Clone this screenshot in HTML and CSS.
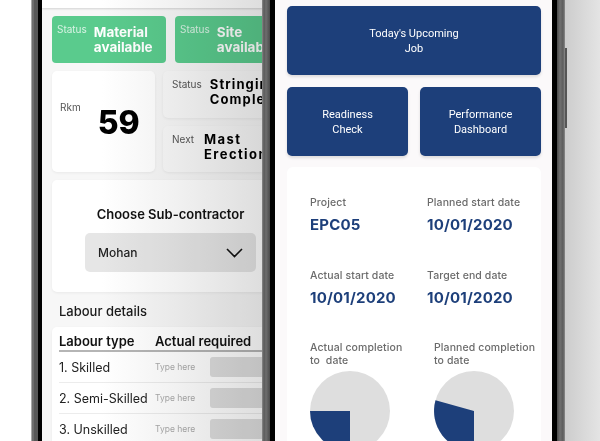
FILE: index.html
```html
<!DOCTYPE html>
<html>
<head>
<meta charset="utf-8">
<link rel="stylesheet" href="styles.css">
</head>
<body>
<div class="scene">
  <div class="phone phone-left">
    <div class="bezel bezel-left">
      <div class="screen screen-left">
        <div class="topbar"></div>
        <div class="green-row">
          <div class="green-card"><span class="g-label">Status</span><span class="g-value">Material<br>available</span></div>
          <div class="green-card"><span class="g-label">Status</span><span class="g-value">Site<br>available</span></div>
        </div>
        <div class="info-row">
          <div class="card rkm-card"><span class="small-label rkm-label">Rkm</span><span class="big-num">59</span></div>
          <div class="info-col">
            <div class="card stat-card"><span class="small-label">Status</span><span class="stat-value">Stringing<br>Completed</span></div>
            <div class="card stat-card next-card"><span class="small-label">Next</span><span class="stat-value">Mast<br>Erection</span></div>
          </div>
        </div>
        <div class="card choose-card">
          <div class="choose-title">Choose Sub-contractor</div>
          <div class="dropdown">
            <span>Mohan</span>
            <svg class="chev" width="17" height="10" viewBox="0 0 17 10"><path d="M1 1 L8.5 8.5 L16 1" fill="none" stroke="#111" stroke-width="1.6"/></svg>
          </div>
        </div>
        <div class="section-title">Labour details</div>
        <div class="card table-card">
          <div class="t-head"><span>Labour type</span><span>Actual required</span></div>
          <div class="t-row"><span class="t-name">1. Skilled</span><span class="t-hint">Type here</span><span class="t-input"></span></div>
          <div class="t-row"><span class="t-name">2. Semi-Skilled</span><span class="t-hint">Type here</span><span class="t-input"></span></div>
          <div class="t-row"><span class="t-name">3. Unskilled</span><span class="t-hint">Type here</span><span class="t-input"></span></div>
        </div>
        <div class="glare"></div>
      </div>
    </div>
  </div>

  <div class="phone phone-right">
    <div class="side-btn"></div>
    <div class="bezel bezel-right">
      <div class="screen screen-right">
        <div class="btn btn-wide">Today's Upcoming<br>Job</div>
        <div class="btn-row">
          <div class="btn">Readiness<br>Check</div>
          <div class="btn">Performance<br>Dashboard</div>
        </div>
        <div class="proj-card">
          <div class="kv-grid">
            <div class="kv"><div class="k">Project</div><div class="v">EPC05</div></div>
            <div class="kv"><div class="k">Planned start date</div><div class="v">10/01/2020</div></div>
            <div class="kv"><div class="k">Actual start date</div><div class="v">10/01/2020</div></div>
            <div class="kv"><div class="k">Target end date</div><div class="v">10/01/2020</div></div>
          </div>
          <div class="pie-grid">
            <div class="pie-item">
              <div class="k">Actual completion<br>to&nbsp; date</div>
              <svg class="pie" width="80" height="80" viewBox="0 0 80 80"><circle cx="40" cy="40" r="40" fill="#dedede"/><path d="M40 40 L0 40 A40 40 0 0 0 40 80 Z" fill="#1d3f7a"/></svg>
            </div>
            <div class="pie-item">
              <div class="k">Planned completion<br>to date</div>
              <svg class="pie" width="80" height="80" viewBox="0 0 80 80"><circle cx="40" cy="40" r="40" fill="#dedede"/><path d="M40 40 L40 80 A40 40 0 0 1 1.5 29.3 Z" fill="#1d3f7a"/></svg>
            </div>
          </div>
        </div>
      </div>
    </div>
  </div>
</div>
</body>
</html>
```

FILE: styles.css
```css
* { box-sizing: border-box; }
html, body { margin: 0; padding: 0; }
body {
  width: 600px;
  height: 441px;
  overflow: hidden;
  background: linear-gradient(90deg, #fff 0, #fff 300px, #cdcdcd 566px, #e4e4e4 600px);
  font-family: "Inter", "Roboto", sans-serif;
}
.scene { position: relative; width: 600px; height: 441px; overflow: hidden; }

/* phones */
.phone {
  position: absolute;
  top: -40px;
  height: 520px;
  background: #585858;
}
.phone-left {
  left: 31px;
  width: 290px;
  padding-left: 7px;
  box-shadow: inset 1px 0 0 #a8a8a8, inset 3px 0 0 #6d6d6d;
}
.phone-right {
  left: 262px;
  width: 303px;
  padding: 0 8px;
  background: linear-gradient(90deg, #8a8a8a 0, #5a5a5a 2px, #6e6e6e 4px, #4a4a4a 8px, #4a4a4a 295px, #707070 298px, #5c5c5c 301px, #8c8c8c 303px);
}
.side-btn {
  position: absolute;
  right: -2px;
  top: 88px;
  width: 2px;
  height: 80px;
  background: #555;
}
.bezel { height: 100%; background: #000; }
.bezel-left { padding-left: 4px; }
.bezel-right { padding: 0 5px; }
.screen { height: 100%; position: relative; overflow: hidden; }

/* left screen */
.screen-left {
  width: 257px;
  background: #f7f7f7;
  padding: 0 10px;
  display: flex;
  flex-direction: column;
}
.topbar {
  height: 48px;
  margin: 0 -10px;
  background: #fff;
  box-shadow: 0 1px 2px rgba(0,0,0,.15);
  flex: none;
}
.green-row {
  margin-top: 8px;
  display: grid;
  grid-template-columns: 114px 114px;
  gap: 9px;
}
.green-card {
  height: 47px;
  background: #5acb8d;
  border-radius: 4px;
  display: flex;
  padding: 7px 5px 0;
  gap: 7px;
}
.g-label { font-size: 10px; color: #d8f3e4; line-height: 12px; }
.g-value { font-size: 13.5px; font-weight: 700; color: #fff; line-height: 15px; margin-top: 2px; }

.card { background: #fff; border-radius: 5px; box-shadow: 0 1px 3px rgba(0,0,0,.06); }
.info-row {
  margin-top: 8px;
  display: grid;
  grid-template-columns: 103px 1fr;
  gap: 8px;
  height: 101px;
}
.rkm-card { display: flex; align-items: center; padding-left: 8px; }
.small-label { font-size: 10px; color: #555; line-height: 12px; }
.rkm-label { margin-bottom: 30px; }
.big-num { font-size: 32px; font-weight: 800; color: #000; margin-left: 17px; line-height: 32px; margin-top: 2px; }
.info-col { display: flex; flex-direction: column; gap: 8px; }
.stat-card { flex: 1; display: flex; padding: 6px 9px 0; gap: 8px; background: #f9f9f9; }
.stat-card .small-label { margin-top: 1px; }
.stat-value { font-size: 13px; font-weight: 700; letter-spacing: 1.1px; line-height: 15px; color: #000; }
.next-card { gap: 10px; }
.next-card .stat-value { letter-spacing: 1.4px; }

.choose-card {
  margin-top: 8px;
  height: 112px;
  display: flex;
  flex-direction: column;
  align-items: center;
  padding-top: 26px;
}
.choose-title { font-size: 13px; font-weight: 600; color: #111; line-height: 16px; }
.dropdown {
  margin-top: 11px;
  width: 171px;
  height: 39px;
  background: #e6e6e6;
  border-radius: 5px;
  display: flex;
  align-items: center;
  justify-content: space-between;
  padding: 0 13px 0 13px;
  font-size: 12px;
  font-weight: 500;
  color: #222;
}
.chev { margin-top: 1px; }

.section-title { margin-top: 11px; padding-left: 7px; font-size: 13px; font-weight: 500; color: #1a1a1a; line-height: 16px; }
.table-card { margin-top: 8px; padding: 6px 0 0 7px; flex: 1; }
.t-head {
  display: grid;
  grid-template-columns: 96px 1fr;
  font-size: 13px;
  font-weight: 600;
  color: #111;
  line-height: 16px;
  height: 19px;
  border-bottom: 2px solid #b5b5b5;
}
.t-row {
  display: grid;
  grid-template-columns: 96px 55px 1fr;
  align-items: center;
  height: 31px;
  border-bottom: 1px solid #ececec;
}
.t-name { font-size: 12.5px; color: #222; }
.t-hint { font-size: 8.5px; color: #aaa; }
.t-input { height: 20px; background: #dedede; border-radius: 3px; }

.glare {
  position: absolute;
  inset: 0;
  pointer-events: none;
  background: linear-gradient(90deg, #fff 0, #fff 60px, #f2f2f2 130px, #dedede 220px);
  mix-blend-mode: multiply;
}

/* right screen */
.screen-right {
  background: #fbf9fa;
  padding: 46px 11px 0 12px;
}
.btn {
  background: #1d3f7a;
  border-radius: 5px;
  color: #fff;
  font-family: "Roboto", sans-serif;
  font-size: 11px;
  line-height: 15px;
  height: 69px;
  display: flex;
  align-items: center;
  justify-content: center;
  text-align: center;
  box-shadow: 0 2px 3px rgba(0,0,0,.12);
}
.btn-row {
  margin-top: 12px;
  display: grid;
  grid-template-columns: 121px 121px;
  gap: 12px;
}
.proj-card {
  margin-top: 11px;
  background: #fff;
  border-radius: 6px;
  padding: 29px 0 0 23px;
  height: 320px;
}
.kv-grid {
  display: grid;
  grid-template-columns: 117px 1fr;
  row-gap: 35px;
}
.k {
  font-size: 10.5px;
  font-weight: 500;
  color: #6b6b6b;
  letter-spacing: .1px;
  line-height: 13px;
}
.v {
  margin-top: 7px;
  font-size: 15px;
  font-weight: 700;
  color: #1d3f7a;
  letter-spacing: .2px;
  line-height: 18px;
}
.pie-grid {
  margin-top: 34px;
  display: grid;
  grid-template-columns: 124px 1fr;
}
.pie { display: block; margin-top: 4px; }
```
